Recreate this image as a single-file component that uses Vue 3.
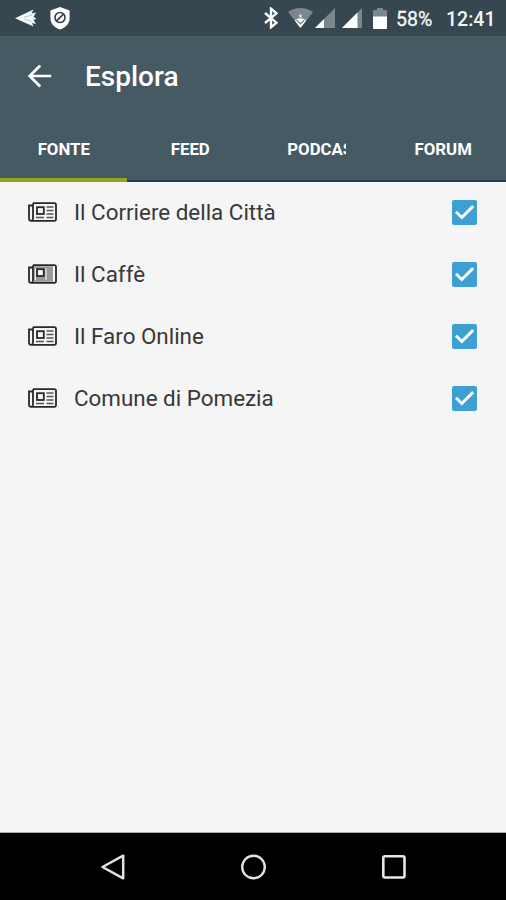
<template>
  <div class="screen">
    <div class="status-bar">
      <svg class="status-bar__plane" width="22" height="20" viewBox="0 0 22 20">
        <path d="M0 10.2L18.5 1.5L16.5 5.6L21 4.5L18.5 9L21.5 10.8L18.5 12L21 16L17 15L18.5 18.5Z" fill="#f4f8f9" />
        <path d="M9 9.2L17 7.2M9 11.2L16.5 13.4" stroke="#a9b6bb" stroke-width="0.8" />
      </svg>
      <svg class="status-bar__shield" width="20" height="23" viewBox="0 0 20 23">
        <path d="M10 0L19.6 3.6V11C19.6 16.8 15.5 20.6 10 22.5C4.5 20.6 .4 16.8 .4 11V3.6Z" fill="#fff" />
        <circle cx="10" cy="10.5" r="5" fill="none" stroke="#37474f" stroke-width="1.7" />
        <path d="M6.8 13.7L13.2 7.3" stroke="#37474f" stroke-width="1.8" />
      </svg>

      <div class="status-bar__system">
        <svg width="14" height="22" viewBox="0 0 14 22">
          <path d="M1 6L12.5 15.7L7 20.3V1.7L12.5 6.3L1 16" fill="none" stroke="#fff" stroke-width="2.4" />
        </svg>
        <svg class="status-bar__wifi" width="25" height="20" viewBox="0 0 25 20">
          <path d="M0 4C7.5 -1.2 17.5 -1.2 25 4L12.5 20Z" fill="#7b878c" />
          <path d="M6.8 12.5C10 9.4 15 9.4 18.2 12.5L12.5 20Z" fill="#fff" />
          <path d="M8.5 11.8L12.5 16L16.5 11.8" fill="none" stroke="#6b777c" stroke-width="1.2" />
          <circle cx="12.5" cy="8" r="1.7" fill="#d4dadc" />
        </svg>
        <svg class="status-bar__signal" width="20" height="20" viewBox="0 0 20 20">
          <path d="M0 20L20 0V20Z" fill="#7b878c" />
          <path d="M0 20L9 11V20Z" fill="#fff" />
        </svg>
        <svg class="status-bar__signal-two" width="20" height="20" viewBox="0 0 20 20">
          <path d="M0 20L20 0V20Z" fill="#7b878c" />
          <path d="M0 20L15.5 4.5V20Z" fill="#fff" />
        </svg>
        <svg class="status-bar__battery" width="14" height="21" viewBox="0 0 14 21">
          <path d="M0 3Q0 2 1 2H4V0H10V2H13Q14 2 14 3V10H0Z" fill="#7b878c" />
          <path d="M0 8.5H14V20Q14 21 13 21H1Q0 21 0 20Z" fill="#fff" />
        </svg>
        <span class="status-bar__percent">58%</span>
        <span class="status-bar__time">12:41</span>
      </div>
    </div>

    <header class="header">
      <div class="toolbar">
        <button class="toolbar__back" type="button" aria-label="Indietro">
          <svg width="24" height="24" viewBox="0 0 24 24">
            <path d="M23.2 11H2M12.2 0.5L1.7 11L12.2 21.5" fill="none" stroke="#fff" stroke-width="2.7" />
          </svg>
        </button>
        <h1 class="toolbar__title">Esplora</h1>
      </div>
      <nav class="tabs">
        <button
          v-for="tab in tabs"
          :key="tab"
          class="tab"
          :class="{ 'tab--active': tab === activeTab }"
          type="button"
          @click="activeTab = tab"
        >
          <span class="tab__label">{{ tab }}</span>
        </button>
      </nav>
    </header>

    <main class="list">
      <label v-for="source in sources" :key="source.name" class="row">
        <svg class="row__icon" width="29" height="20" viewBox="0 0 29 20">
          <path
            d="M5 1.2H26.3Q28 1.2 28 3V17Q28 18.8 26.3 18.8H3.2Q1 18.8 1 16.5V3.5H4.5M5 1.2V16.5Q5 18.5 3.2 18.8"
            fill="none"
            stroke="#292929"
            stroke-width="1.8"
          />
          <path v-if="source.filled" d="M6 2.2H25.5V17.8H6Z" fill="#999" />
          <path v-if="source.filled" d="M25.6 2.5V17.5" stroke="#f5f5f5" stroke-width="1.4" />
          <rect x="9" y="5.2" width="6.8" height="6.8" :fill="source.filled ? '#f5f5f5' : 'none'" stroke="#292929" stroke-width="1.8" />
          <path v-if="source.filled" d="M18 4V16M7.4 4V16" stroke="#eee" stroke-width="1.2" />
          <path v-else d="M18.5 5H25.5M18.5 8.5H25.5M18.5 12H25.5M8 15.5H16M18.5 15.5H25.5" stroke="#555" stroke-width="1.4" />
        </svg>
        <span class="row__name">{{ source.name }}</span>
        <input v-model="source.checked" class="row__input" type="checkbox" />
        <span class="checkbox" :class="{ 'checkbox--checked': source.checked }">
          <svg v-if="source.checked" width="25" height="25" viewBox="0 0 25 25">
            <path d="M4 11.8L9.8 17.5L21.2 6.1" fill="none" stroke="#fff" stroke-width="2.9" />
          </svg>
        </span>
      </label>
    </main>

    <footer class="nav-bar">
      <svg width="26" height="28" viewBox="0 0 26 28">
        <path d="M23.2 2.7V25.3L2.5 14Z" fill="none" stroke="#e2e2e2" stroke-width="2.5" stroke-linejoin="round" />
      </svg>
      <svg width="28" height="28" viewBox="0 0 28 28">
        <circle cx="14.5" cy="14" r="11.3" fill="none" stroke="#e2e2e2" stroke-width="2.4" />
      </svg>
      <svg width="28" height="28" viewBox="0 0 28 28">
        <rect x="3.3" y="3.3" width="21.2" height="21.2" rx="1.5" fill="none" stroke="#e6e6e6" stroke-width="2.6" />
      </svg>
    </footer>
  </div>
</template>

<script setup>
import { ref } from 'vue'

const tabs = ['FONTE', 'FEED', 'PODCAST', 'FORUM']
const activeTab = ref('FONTE')

const sources = ref([
  { name: 'Il Corriere della Città', checked: true },
  { name: 'Il Caffè', checked: true, filled: true },
  { name: 'Il Faro Online', checked: true },
  { name: 'Comune di Pomezia', checked: true }
])
</script>

<style>
body {
  margin: 0;
}
</style>

<style scoped>
.screen {
  display: flex;
  flex-direction: column;
  width: 100%;
  height: 100vh;
  overflow: hidden;
  background: #f5f5f5;
  font-family: Roboto, sans-serif;
}

.screen svg {
  display: block;
  flex: none;
}

button {
  padding: 0;
  border: none;
  background: none;
  font-family: inherit;
}

/* Status bar */
.status-bar {
  display: flex;
  align-items: center;
  flex: none;
  box-sizing: border-box;
  height: 36px;
  padding: 0 11px 0 15px;
  background: #37474f;
  color: #f4f7f8;
}

.status-bar__shield {
  margin-left: 13px;
}

.status-bar__system {
  display: flex;
  align-items: center;
  margin-left: auto;
}

.status-bar__wifi {
  margin-left: 10px;
}

.status-bar__signal {
  margin-left: 2px;
}

.status-bar__signal-two {
  margin-left: 7px;
}

.status-bar__battery {
  margin-left: 11px;
}

.status-bar__percent {
  width: 37px;
  margin: 3px 0 0 9px;
  font-size: 19.5px;
  line-height: 22px;
  -webkit-text-stroke: 0.3px currentColor;
}

.status-bar__time {
  width: 49px;
  margin: 3px 0 0 13px;
  font-size: 19.5px;
  font-weight: 500;
  line-height: 22px;
}

/* Header */
.header {
  display: flex;
  flex-direction: column;
  flex: none;
  height: 145.5px;
  background: #455a62;
}

.toolbar {
  display: flex;
  align-items: center;
  height: 81px;
  padding-left: 28px;
}

.toolbar__title {
  margin: 0 0 0 33px;
  color: #fff;
  font-size: 28px;
  font-weight: 500;
  line-height: 34px;
}

.tabs {
  display: grid;
  grid-template-columns: repeat(4, 1fr);
  flex: 1;
}

.tab {
  display: flex;
  align-items: center;
  justify-content: center;
  padding-top: 1px;
  border-bottom: 2px solid #1f404d;
  color: #fff;
}

.tab--active {
  padding-top: 3px;
  border-bottom: 4px solid #93a51c;
}

.tab__label {
  box-sizing: border-box;
  max-width: 60px;
  padding-left: 1px;
  overflow: hidden;
  font-size: 16.8px;
  font-weight: 700;
  line-height: 22px;
  white-space: nowrap;
}

/* Source list */
.list {
  flex: 1;
}

.row {
  display: flex;
  align-items: center;
  height: 62px;
  padding: 0 29px 0 28px;
}

.row__icon {
  margin-bottom: 1px;
}

.row__name {
  flex: 1;
  margin: 0 0 2px 17px;
  color: #383838;
  font-size: 22.4px;
  line-height: 28px;
}

.row__input {
  display: none;
}

.checkbox {
  box-sizing: border-box;
  width: 25px;
  height: 25px;
  border: 2px solid #777;
  border-radius: 2px;
}

.checkbox--checked {
  border: none;
  background: #3e9fd3;
}

/* Navigation bar */
.nav-bar {
  display: flex;
  align-items: center;
  justify-content: space-between;
  flex: none;
  box-sizing: border-box;
  height: 68px;
  padding: 0 98px 0 100px;
  border-top: 1px solid #aaa;
  background: #000;
}
</style>
